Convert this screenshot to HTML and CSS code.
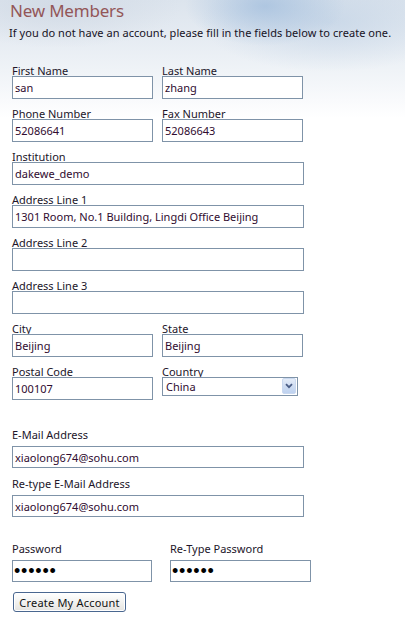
FILE: index.html
```html
<!DOCTYPE html>
<html lang="en">
<head>
<meta charset="utf-8">
<title>New Members</title>
<link rel="stylesheet" href="styles.css">
</head>
<body>
<div class="page">
  <header class="intro">
    <h1 class="title">New Members</h1>
    <p class="lead">If you do not have an account, please fill in the fields below to create one.</p>
  </header>
  <form class="form">
    <div class="row">
      <div class="field"><label class="lbl">First Name</label><input class="txt" type="text" value="san"></div>
      <div class="field"><label class="lbl">Last Name</label><input class="txt" type="text" value="zhang"></div>
    </div>
    <div class="row">
      <div class="field"><label class="lbl">Phone Number</label><input class="txt" type="text" value="52086641"></div>
      <div class="field"><label class="lbl">Fax Number</label><input class="txt" type="text" value="52086643"></div>
    </div>
    <div class="field"><label class="lbl">Institution</label><input class="txt wide" type="text" value="dakewe_demo"></div>
    <div class="field"><label class="lbl">Address Line 1</label><input class="txt wide" type="text" value="1301 Room, No.1 Building, Lingdi Office Beijing"></div>
    <div class="field"><label class="lbl">Address Line 2</label><input class="txt wide" type="text" value=""></div>
    <div class="field"><label class="lbl">Address Line 3</label><input class="txt wide" type="text" value=""></div>
    <div class="row">
      <div class="field"><label class="lbl">City</label><input class="txt" type="text" value="Beijing"></div>
      <div class="field"><label class="lbl">State</label><input class="txt" type="text" value="Beijing"></div>
    </div>
    <div class="row">
      <div class="field"><label class="lbl">Postal Code</label><input class="txt" type="text" value="100107"></div>
      <div class="field">
        <label class="lbl">Country</label>
        <div class="select-wrap">
          <select class="sel"><option>China</option></select>
          <span class="sel-btn"><svg width="8" height="6" viewBox="0 0 8 6"><path d="M1 1.2 L4 4.2 L7 1.2" fill="none" stroke="#4a5d86" stroke-width="1.8"/></svg></span>
        </div>
      </div>
    </div>
    <div class="emails">
      <div class="field"><label class="lbl spaced">E-Mail Address</label><input class="txt wide slim" type="text" value="xiaolong674@sohu.com"></div>
      <div class="field"><label class="lbl spaced">Re-type E-Mail Address</label><input class="txt wide slim" type="text" value="xiaolong674@sohu.com"></div>
    </div>
    <div class="pw-row">
      <div class="field"><label class="lbl spaced">Password</label><input class="txt pw" type="password" value="123456"></div>
      <div class="field"><label class="lbl spaced">Re-Type Password</label><input class="txt pw" type="password" value="123456"></div>
    </div>
    <button class="submit" type="button">Create My Account</button>
  </form>
</div>
</body>
</html>
```
FILE: styles.css
```css
html, body {
  margin: 0;
  padding: 0;
}
body {
  width: 405px;
  height: 626px;
  overflow: hidden;
  font-family: "Noto Sans", "Open Sans", sans-serif;
  font-size: 11px;
  color: #1d1424;
  background:
    radial-gradient(ellipse 80px 40px at 265px 6px, rgba(165, 192, 222, 0.8), rgba(165, 192, 222, 0) 100%),
    radial-gradient(ellipse 130px 50px at 330px 22px, rgba(190, 208, 228, 0.65), rgba(190, 208, 228, 0) 100%),
    radial-gradient(ellipse 120px 40px at 60px 8px, rgba(205, 214, 226, 0.7), rgba(205, 214, 226, 0) 100%),
    linear-gradient(to bottom, #dce4ed 0, #e5ebf2 35px, #eff3f7 70px, #f9fafc 100px, #ffffff 118px);
}
.page {
  padding: 0;
}
.intro {
  padding-top: 1px;
}
.title {
  margin: 0 0 0 10px;
  font-size: 17px;
  line-height: 20px;
  font-weight: normal;
  color: #935658;
  letter-spacing: -0.2px;
}
.lead {
  margin: 5px 0 0 9px;
  line-height: 14px;
  font-size: 11px;
  letter-spacing: 0.05px;
  color: #17121f;
}
.form {
  margin: 16px 0 0 0;
  padding-left: 12px;
}
.row {
  display: grid;
  grid-template-columns: 141px 141px;
  column-gap: 9px;
}
.field {
  display: flex;
  flex-direction: column;
  align-items: flex-start;
}
.lbl {
  display: block;
  padding-top: 7px;
  line-height: 16px;
  margin-bottom: -3px;
  color: #22162a;
  white-space: nowrap;
}
.lbl.spaced {
  padding-top: 8px;
  margin-bottom: 3px;
}
.txt {
  display: block;
  box-sizing: border-box;
  width: 141px;
  height: 23px;
  margin: 0;
  padding: 0 2px;
  border: 1px solid #7f93a8;
  background: #fff;
  font-family: "Noto Sans", "Open Sans", sans-serif;
  font-size: 11px;
  color: #300c30;
  outline: none;
}
.txt.wide {
  width: 292px;
}
.txt.slim {
  height: 22px;
}
.select-wrap {
  position: relative;
  width: 136px;
  height: 19px;
}
.sel {
  display: block;
  box-sizing: border-box;
  width: 136px;
  height: 19px;
  margin: 0;
  padding: 0 0 0 3px;
  border: 1px solid #7f93a8;
  border-radius: 0;
  background: #fff;
  -webkit-appearance: none;
  appearance: none;
  font-family: "Noto Sans", "Open Sans", sans-serif;
  font-size: 11px;
  line-height: 17px;
  color: #300c30;
  outline: none;
}
.sel-btn {
  position: absolute;
  top: 1px;
  right: 2px;
  width: 14px;
  height: 16px;
  box-sizing: border-box;
  border: 1px solid #c9d8ef;
  border-radius: 2px;
  background: linear-gradient(to bottom, #e4ecf8 0, #cddbf1 55%, #bed2f0 100%);
  display: flex;
  align-items: center;
  justify-content: center;
  pointer-events: none;
}
.emails {
  margin-top: 19px;
}
.pw-row {
  margin-top: 16px;
  display: grid;
  grid-template-columns: 140px 141px;
  column-gap: 18px;
}
.txt.pw {
  height: 22px;
  width: 140px;
  font-family: "Liberation Sans", sans-serif;
  font-size: 18px;
  letter-spacing: 0.8px;
  color: #000;
  padding-left: 1px;
}
.pw-row .field:last-child .txt.pw {
  width: 141px;
}
.submit {
  display: block;
  margin: 10px 0 0 1px;
  box-sizing: border-box;
  width: 113px;
  height: 20px;
  padding: 0;
  border: 1px solid #4a6790;
  border-radius: 3px;
  background: linear-gradient(to bottom, #ffffff 0, #f4f4f2 45%, #e4e3df 100%);
  box-shadow: inset 0 0 0 1px #ffffff;
  font-family: "Noto Sans", "Open Sans", sans-serif;
  font-size: 11px;
  letter-spacing: 0.2px;
  color: #111;
  cursor: pointer;
}
```
